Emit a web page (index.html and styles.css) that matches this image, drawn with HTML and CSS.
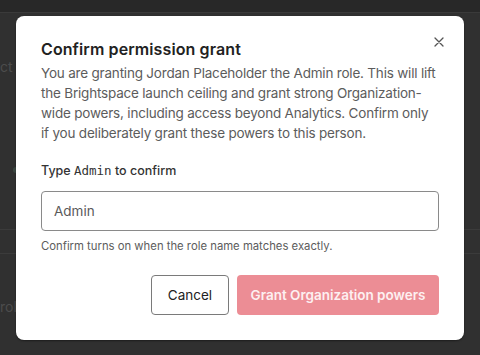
FILE: index.html
```html
<!DOCTYPE html>
<html>
<head>
<meta charset="utf-8">
<link rel="stylesheet" href="styles.css">
</head>
<body>
<div class="page">
  <div class="topbar"></div>
  <div class="bg-content">
    <div class="bg-text t1">ct c</div>
    <div class="bg-dot"></div>
    <div class="bg-line l1"></div>
    <div class="bg-line l2"></div>
    <div class="bg-text t2">role</div>
  </div>
  <div class="overlay">
    <div class="dialog" role="dialog">
      <button class="close" aria-label="Close">
        <svg width="10" height="10" viewBox="0 0 10 10"><path d="M1 1 L9 9 M9 1 L1 9" stroke="#555" stroke-width="1.3" stroke-linecap="round"/></svg>
      </button>
      <h2 class="title">Confirm permission grant</h2>
      <p class="desc">You are granting Jordan Placeholder the Admin role. This will lift the Brightspace launch ceiling and grant strong Organization-wide powers, including access beyond Analytics. Confirm only if&nbsp;you deliberately grant these powers to this person.</p>
      <label class="label">Type <code>Admin</code> to confirm</label>
      <div class="input">Admin</div>
      <div class="hint">Confirm turns on when the role name matches exactly.</div>
      <div class="actions">
        <button class="btn cancel">Cancel</button>
        <button class="btn grant">Grant Organization powers</button>
      </div>
    </div>
  </div>
</div>
</body>
</html>
```
FILE: styles.css
```css
html, body { margin: 0; padding: 0; }
body {
  width: 480px; height: 355px; overflow: hidden;
  background: #303030;
  font-family: "Inter", "Open Sans", sans-serif;
}
.page { position: relative; width: 480px; height: 355px; }
.topbar { height: 12px; background: #282828; border-bottom: 1px solid #3a3a3a; }
.bg-content { position: absolute; inset: 0; }
.bg-text { position: absolute; color: #4c4c4c; font-size: 14px; }
.t1 { left: 0; top: 58px; }
.t2 { left: 0; top: 298px; }
.bg-dot { position: absolute; left: 13px; top: 167px; width: 6px; height: 6px; border-radius: 50%; background: #3c4842; }
.bg-line { position: absolute; left: 0; right: 0; height: 1px; background: #3b3b3b; }
.l1 { top: 229px; }
.l2 { top: 253px; }
.overlay { position: absolute; inset: 0; padding: 16px; box-sizing: border-box; }
.dialog {
  position: relative;
  width: 448px; height: 324px; box-sizing: border-box;
  background: #fff; border-radius: 8px;
  padding: 23px 25px 25px 25px;
  display: flex; flex-direction: column;
  box-shadow: 0 1px 2px rgba(0,0,0,0.4);
}
.close {
  position: absolute; left: 418px; top: 21px;
  width: 10px; height: 10px; padding: 0; border: 0; background: none;
  display: flex;
}
.title { margin: 0; font-size: 16px; font-weight: 600; color: #222; line-height: 21px; letter-spacing: 0.1px; }
.desc { margin: 3px -2px 0 0; font-size: 13.5px; line-height: 20px; color: #5c5c5c; letter-spacing: -0.2px; }
.label { margin-top: 19px; font-size: 12.5px; font-weight: 500; color: #333; line-height: 18px; }
.label code { font-family: "DejaVu Sans Mono", monospace; font-size: 12.5px; }
.input {
  margin-top: 11px; height: 40px; box-sizing: border-box;
  border: 1px solid #8a8a8a; border-radius: 4px;
  padding: 0 12px; display: flex; align-items: center;
  font-size: 13.5px; color: #5a5a5a;
}
.hint { margin-top: 8px; font-size: 11.3px; color: #5c5c5c; line-height: 14px; }
.actions { margin-top: auto; display: flex; justify-content: flex-end; gap: 8px; }
.btn { height: 40px; border-radius: 4px; font-family: inherit; font-size: 13.5px; padding: 0 10px; }
.cancel { width: 78px; background: #fff; border: 1px solid #7a7a7a; color: #222; }
.grant { width: 202px; background: #ec8d95; border: 0; color: #fdf0f1; font-weight: 600; }
```
